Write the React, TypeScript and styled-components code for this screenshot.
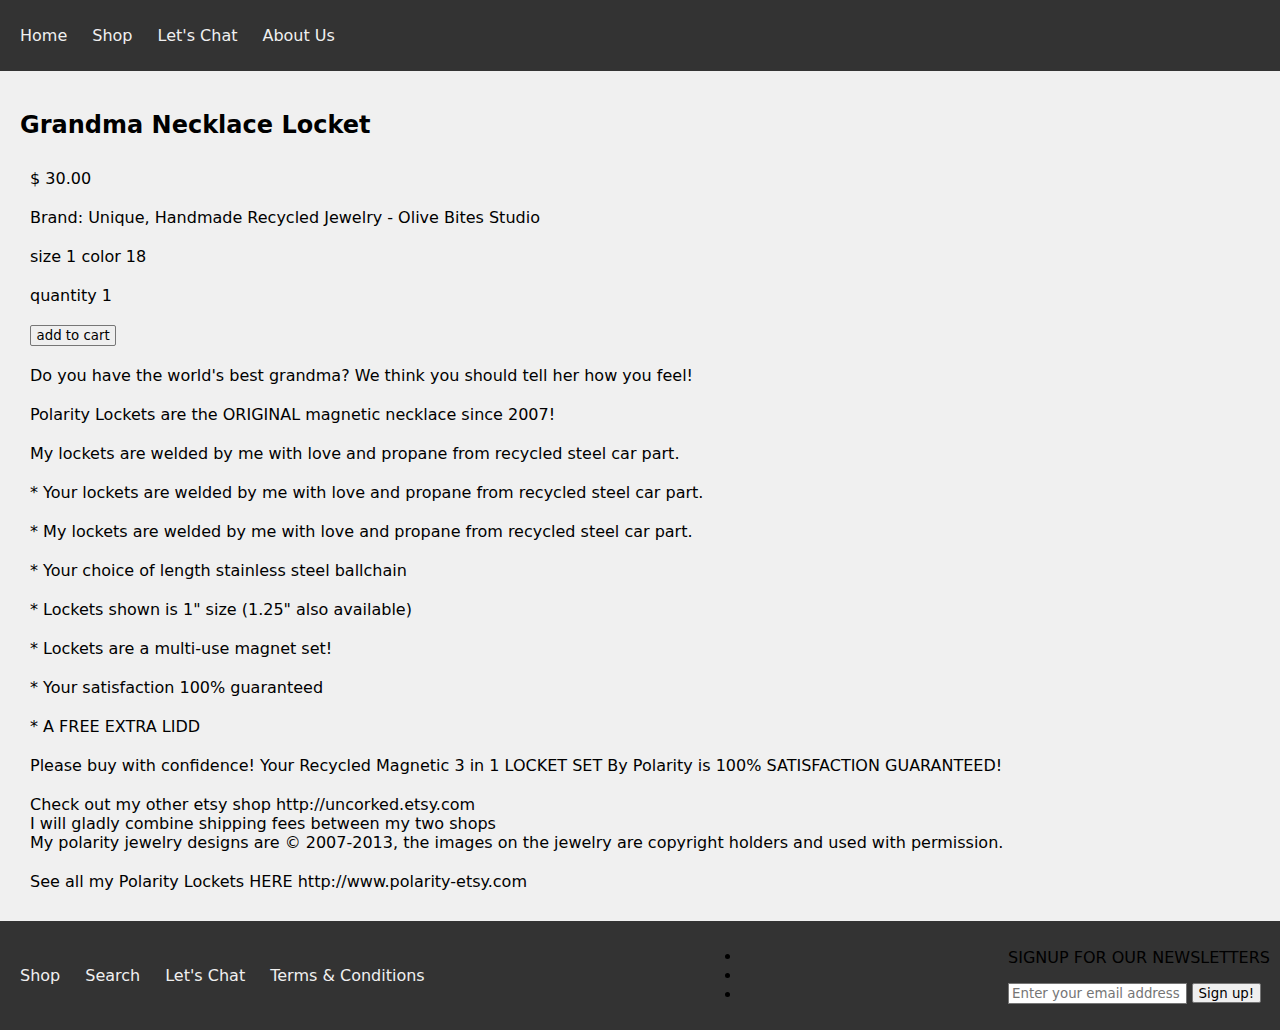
import styled, { createGlobalStyle } from "styled-components";

const GlobalStyle = createGlobalStyle`
  html, body {
    margin: 0;
    padding: 0;
    background: #f0f0f0;
    font-family: "DejaVu Sans", sans-serif;
    font-size: 16px;
    color: #000;
  }
`;

const Header = styled.header`
  background: #333;
  padding: 26px 20px;
  display: flex;
  gap: 25px;
`;

const NavLink = styled.a`
  color: #f0f0f0;
  text-decoration: none;
  line-height: 19px;
  font-size: 16px;
`;

const Main = styled.main`
  padding: 20px 20px 0;
`;

const Title = styled.h2`
  font-size: 24px;
  font-weight: bold;
  line-height: 28px;
  margin: 20px 0 20px;
`;

const Content = styled.div`
  padding: 10px;
`;

const Line = styled.p`
  margin: 0 0 20px;
  line-height: 19px;
`;

const CartRow = styled.div`
  margin: 0 0 20px;
  height: 21px;
`;

const SmallButton = styled.button<{ $h?: number }>`
  font-family: "DejaVu Sans", sans-serif;
  font-size: 13.33px;
  line-height: 15px;
  padding: 2px 5.5px;
  background: #efefef;
  color: #000;
  border: 1px solid #767676;
  border-radius: 2px;
  height: ${(p) => p.$h ?? 21}px;
  box-sizing: border-box;
`;

const Footer = styled.footer`
  background: #333;
  padding: 10px 10px 10px 20px;
  display: flex;
  justify-content: space-between;
  align-items: center;
`;

const FooterNav = styled.nav`
  display: flex;
  gap: 25px;
`;

const Bullets = styled.ul`
  margin: 16px 0;
  padding-left: 52px;
  width: 0;

  li {
    line-height: 19px;
    height: 19px;
    color: #000;
  }
`;

const Signup = styled.form`
  display: flex;
  flex-direction: column;
  gap: 16px;
`;

const SignupTitle = styled.div`
  color: #000;
  line-height: 19px;
  font-size: 16px;
`;

const SignupRow = styled.div`
  display: flex;
  align-items: center;
  gap: 5px;
`;

const EmailInput = styled.input`
  width: 179px;
  height: 21px;
  box-sizing: border-box;
  font-family: "DejaVu Sans", sans-serif;
  font-size: 13.33px;
  padding: 1px 3px;
  border: 1px solid #767676;
  background: #fff;

  &::placeholder {
    color: #757575;
  }
`;

const textLines = [
  "Do you have the world's best grandma? We think you should tell her how you feel!",
  "Polarity Lockets are the ORIGINAL magnetic necklace since 2007!",
  "My lockets are welded by me with love and propane from recycled steel car part.",
  "* Your lockets are welded by me with love and propane from recycled steel car part.",
  "* My lockets are welded by me with love and propane from recycled steel car part.",
  "* Your choice of length stainless steel ballchain",
  '* Lockets shown is 1" size (1.25" also available)',
  "* Lockets are a multi-use magnet set!",
  "* Your satisfaction 100% guaranteed",
  "* A FREE EXTRA LIDD",
  "Please buy with confidence! Your Recycled Magnetic 3 in 1 LOCKET SET By Polarity is 100% SATISFACTION GUARANTEED!",
];

export default function App() {
  return (
    <>
      <GlobalStyle />
      <Header>
        <NavLink href="#">Home</NavLink>
        <NavLink href="#">Shop</NavLink>
        <NavLink href="#">Let's Chat</NavLink>
        <NavLink href="#">About Us</NavLink>
      </Header>

      <Main>
        <Title>Grandma Necklace Locket</Title>
        <Content>
          <Line>$ 30.00</Line>
          <Line>Brand: Unique, Handmade Recycled Jewelry - Olive Bites Studio</Line>
          <Line>size 1 color 18</Line>
          <Line>quantity 1</Line>
          <CartRow>
            <SmallButton type="button">add to cart</SmallButton>
          </CartRow>
          {textLines.map((t) => (
            <Line key={t}>{t}</Line>
          ))}
          <Line>
            Check out my other etsy shop http://uncorked.etsy.com
            <br />
            I will gladly combine shipping fees between my two shops
            <br />
            My polarity jewelry designs are © 2007-2013, the images on the jewelry are copyright holders and used with permission.
          </Line>
          <Line>See all my Polarity Lockets HERE http://www.polarity-etsy.com</Line>
        </Content>
      </Main>

      <Footer>
        <FooterNav>
          <NavLink href="#">Shop</NavLink>
          <NavLink href="#">Search</NavLink>
          <NavLink href="#">Let's Chat</NavLink>
          <NavLink href="#">Terms &amp; Conditions</NavLink>
        </FooterNav>
        <Bullets>
          <li></li>
          <li></li>
          <li></li>
        </Bullets>
        <Signup onSubmit={(e) => e.preventDefault()}>
          <SignupTitle>SIGNUP FOR OUR NEWSLETTERS</SignupTitle>
          <SignupRow>
            <EmailInput type="email" placeholder="Enter your email address" />
            <SmallButton type="submit" $h={20}>Sign up!</SmallButton>
          </SignupRow>
        </Signup>
      </Footer>
    </>
  );
}
